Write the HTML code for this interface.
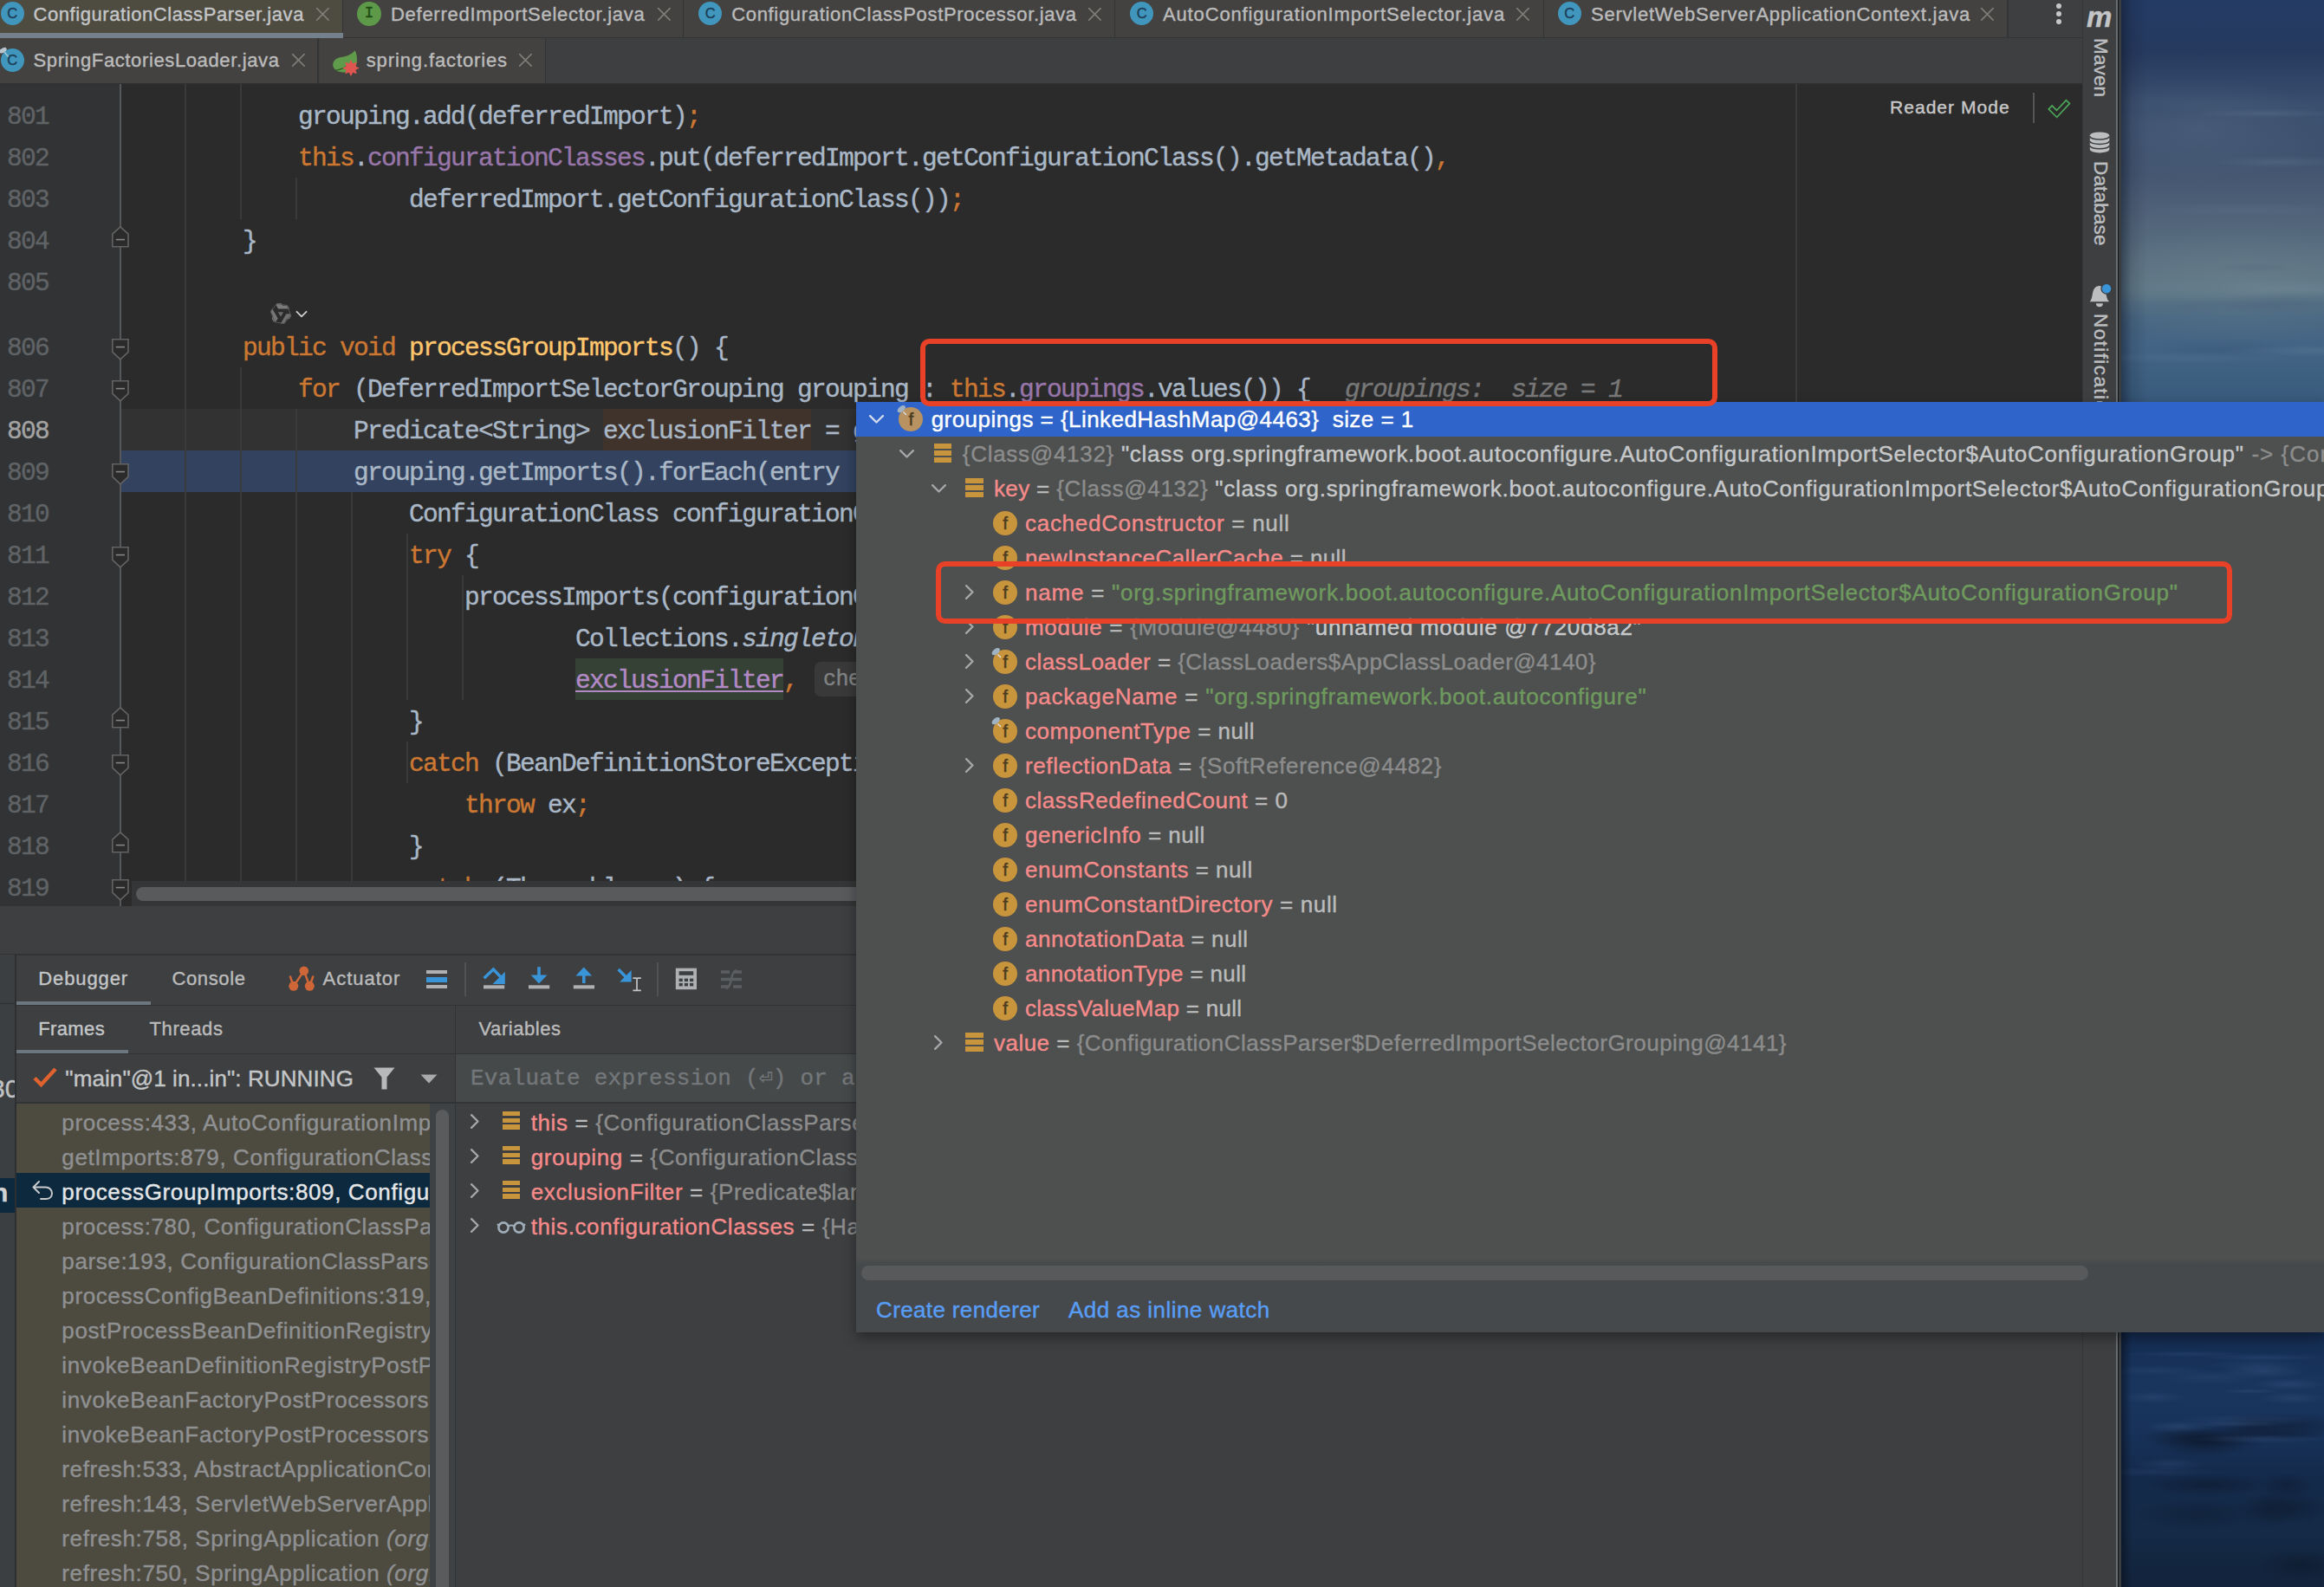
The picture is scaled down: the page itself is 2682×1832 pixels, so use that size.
<!DOCTYPE html>
<html lang="en"><head><meta charset="utf-8"><title>ConfigurationClassParser.java - debugger</title>
<style>
html,body{margin:0;padding:0;background:#3c3f41;}
body{width:2682px;height:1832px;position:relative;overflow:hidden;font-family:"Liberation Sans", sans-serif;}
#root{position:absolute;left:0;top:0;width:2682px;height:1832px;overflow:hidden;}
#root div{position:absolute;white-space:pre;box-sizing:border-box;}
#root svg{position:absolute;overflow:visible;}
.u{font-family:"Liberation Sans", sans-serif;-webkit-text-stroke:0.4px;}
.m{font-family:"Liberation Mono", monospace;-webkit-text-stroke:0.42px;}
.clip{overflow:hidden;}
</style></head>
<body><div id="root">
<div style="left:0px;top:0px;width:2403px;height:97px;background:#3d3f41;"></div>
<div style="left:0px;top:43px;width:2403px;height:1px;background:#323536;"></div>
<div style="left:0px;top:96px;width:2403px;height:1px;background:#2f3132;"></div>
<div style="left:0px;top:0px;width:395px;height:43px;background:#4e4b40;"></div>
<div style="left:395px;top:0px;width:1.5px;height:43px;background:#323435;"></div>
<div style="left:0.5000000000000018px;top:2.200000000000001px;width:27.2px;height:27.2px;border-radius:50%;background:#4096bc;"></div>
<div class="u" style="left:0.5000000000000018px;top:2.4000000000000012px;width:27.2px;height:27.2px;line-height:27.2px;text-align:center;font-size:16.5px;color:#1c3d55;font-weight:normal;">C</div>
<div class="u" style="left:38.5px;top:-3.5px;font-size:22px;line-height:40px;color:#c4c6c8;letter-spacing:0.571px;">ConfigurationClassParser.java</div>
<svg style="left:364.6px;top:8.6px" width="14.8" height="14.8" viewBox="0 0 14.8 14.8"><path d="M0.7 0.7L14.100000000000001 14.100000000000001M14.100000000000001 0.7L0.7 14.100000000000001" stroke="#7d7d78" stroke-width="1.7" fill="none" stroke-linecap="round"/></svg>
<div style="left:396px;top:0px;width:392px;height:43px;background:#434241;"></div>
<div style="left:788px;top:0px;width:1.5px;height:43px;background:#323435;"></div>
<div style="left:412.1px;top:2.200000000000001px;width:27.8px;height:27.8px;border-radius:50%;background:#5d9949;"></div>
<div class="m" style="left:412.1px;top:2.4000000000000012px;width:27.8px;height:27.8px;line-height:27.8px;text-align:center;font-size:17.5px;color:#1d4d14;font-weight:normal;">I</div>
<div class="u" style="left:451px;top:-3.5px;font-size:22px;line-height:40px;color:#bbbbbb;letter-spacing:0.726px;">DeferredImportSelector.java</div>
<svg style="left:758.6px;top:8.6px" width="14.8" height="14.8" viewBox="0 0 14.8 14.8"><path d="M0.7 0.7L14.100000000000001 14.100000000000001M14.100000000000001 0.7L0.7 14.100000000000001" stroke="#7d7d78" stroke-width="1.7" fill="none" stroke-linecap="round"/></svg>
<div style="left:789px;top:0px;width:496.5999999999999px;height:43px;background:#434241;"></div>
<div style="left:1285.6px;top:0px;width:1.5px;height:43px;background:#323435;"></div>
<div style="left:806.0999999999999px;top:2.200000000000001px;width:27.2px;height:27.2px;border-radius:50%;background:#4096bc;"></div>
<div class="u" style="left:806.0999999999999px;top:2.4000000000000012px;width:27.2px;height:27.2px;line-height:27.2px;text-align:center;font-size:16.5px;color:#1c3d55;font-weight:normal;">C</div>
<div class="u" style="left:844.2px;top:-3.5px;font-size:22px;line-height:40px;color:#bbbbbb;letter-spacing:0.678px;">ConfigurationClassPostProcessor.java</div>
<svg style="left:1256.3px;top:8.6px" width="14.8" height="14.8" viewBox="0 0 14.8 14.8"><path d="M0.7 0.7L14.100000000000001 14.100000000000001M14.100000000000001 0.7L0.7 14.100000000000001" stroke="#7d7d78" stroke-width="1.7" fill="none" stroke-linecap="round"/></svg>
<div style="left:1286.6px;top:0px;width:494.10000000000014px;height:43px;background:#434241;"></div>
<div style="left:1780.7px;top:0px;width:1.5px;height:43px;background:#323435;"></div>
<div style="left:1304.1000000000001px;top:2.200000000000001px;width:27.2px;height:27.2px;border-radius:50%;background:#4096bc;"></div>
<div class="u" style="left:1304.1000000000001px;top:2.4000000000000012px;width:27.2px;height:27.2px;line-height:27.2px;text-align:center;font-size:16.5px;color:#1c3d55;font-weight:normal;">C</div>
<div class="u" style="left:1342px;top:-3.5px;font-size:22px;line-height:40px;color:#bbbbbb;letter-spacing:0.849px;">AutoConfigurationImportSelector.java</div>
<svg style="left:1750.1999999999998px;top:8.6px" width="14.8" height="14.8" viewBox="0 0 14.8 14.8"><path d="M0.7 0.7L14.100000000000001 14.100000000000001M14.100000000000001 0.7L0.7 14.100000000000001" stroke="#7d7d78" stroke-width="1.7" fill="none" stroke-linecap="round"/></svg>
<div style="left:1781.7px;top:0px;width:534.3px;height:43px;background:#434241;"></div>
<div style="left:2316px;top:0px;width:1.5px;height:43px;background:#323435;"></div>
<div style="left:1797.7px;top:2.200000000000001px;width:27.2px;height:27.2px;border-radius:50%;background:#4096bc;"></div>
<div class="u" style="left:1797.7px;top:2.4000000000000012px;width:27.2px;height:27.2px;line-height:27.2px;text-align:center;font-size:16.5px;color:#1c3d55;font-weight:normal;">C</div>
<div class="u" style="left:1836px;top:-3.5px;font-size:22px;line-height:40px;color:#bbbbbb;letter-spacing:0.768px;">ServletWebServerApplicationContext.java</div>
<svg style="left:2286.2999999999997px;top:8.6px" width="14.8" height="14.8" viewBox="0 0 14.8 14.8"><path d="M0.7 0.7L14.100000000000001 14.100000000000001M14.100000000000001 0.7L0.7 14.100000000000001" stroke="#7d7d78" stroke-width="1.7" fill="none" stroke-linecap="round"/></svg>
<div style="left:0px;top:37.8px;width:396.2px;height:6px;background:#74808c;"></div>
<div style="left:2372.8px;top:3.8px;width:6.4px;height:6.4px;border-radius:50%;background:#c4c6c8;"></div>
<div style="left:2372.8px;top:12.8px;width:6.4px;height:6.4px;border-radius:50%;background:#c4c6c8;"></div>
<div style="left:2372.8px;top:21.8px;width:6.4px;height:6.4px;border-radius:50%;background:#c4c6c8;"></div>
<div style="left:0px;top:44px;width:367px;height:52px;background:#434241;"></div>
<div style="left:366.2px;top:44px;width:1.6px;height:52px;background:#323435;"></div>
<div style="left:0.5px;top:56.199999999999996px;width:27.2px;height:27.2px;border-radius:50%;background:#4096bc;"></div>
<div class="u" style="left:0.5px;top:56.4px;width:27.2px;height:27.2px;line-height:27.2px;text-align:center;font-size:16.5px;color:#1c3d55;font-weight:normal;">C</div>
<svg style="left:0px;top:53.5px" width="14" height="12" viewBox="0 0 14 12"><ellipse cx="3.5" cy="4.2" rx="4.6" ry="2.6" transform="rotate(-30 3.5 4.2)" fill="#b9c6cf"/><path d="M5 6L9.5 11.5" stroke="#9fc3d6" stroke-width="1.6"/></svg>
<div class="u" style="left:38.5px;top:50.0px;font-size:22px;line-height:40px;color:#bbbbbb;letter-spacing:0.622px;">SpringFactoriesLoader.java</div>
<svg style="left:336.6px;top:62.4px" width="14.8" height="14.8" viewBox="0 0 14.8 14.8"><path d="M0.7 0.7L14.100000000000001 14.100000000000001M14.100000000000001 0.7L0.7 14.100000000000001" stroke="#7d7d78" stroke-width="1.7" fill="none" stroke-linecap="round"/></svg>
<div style="left:368.5px;top:44px;width:260px;height:52px;background:#434241;"></div>
<div style="left:628.6px;top:44px;width:1.5px;height:52px;background:#323435;"></div>
<svg style="left:380px;top:54px" width="38" height="34" viewBox="380 54 38 34"><path d="M409.7 58.3C412.5 64 413 72 410 78C406 84.5 396 84 390.5 82.5C388 82 385 79.5 384.2 75.8C383.8 70 388.5 66.5 394 66C400.5 65.3 406 62.5 409.7 58.3Z" fill="#609a4b"/><path d="M387 81.2C393 80.5 399 78 404 73.5" stroke="#2d5a26" stroke-width="1.2" fill="none"/><path d="M405 69l2.2 4.3 4.6-1.6-1.4 4.7 4.4 2.1-4.4 2.2 1.4 4.6-4.6-1.5-2.2 4.3-2.2-4.3-4.6 1.5 1.4-4.6-4.4-2.2 4.4-2.1-1.4-4.7 4.6 1.6z" fill="#de564f"/></svg>
<div class="u" style="left:422.7px;top:50.0px;font-size:22px;line-height:40px;color:#bbbbbb;letter-spacing:0.882px;">spring.factories</div>
<svg style="left:598.6px;top:62.4px" width="14.8" height="14.8" viewBox="0 0 14.8 14.8"><path d="M0.7 0.7L14.100000000000001 14.100000000000001M14.100000000000001 0.7L0.7 14.100000000000001" stroke="#7d7d78" stroke-width="1.7" fill="none" stroke-linecap="round"/></svg>
<div style="left:0px;top:97px;width:2403px;height:949px;background:#2b2b2b;"></div>
<div style="left:0px;top:97px;width:138px;height:949px;background:#313335;"></div>
<div style="left:139px;top:472px;width:2264px;height:48px;background:#323232;"></div>
<div style="left:139px;top:520px;width:2264px;height:48px;background:#32425f;"></div>
<div style="left:696px;top:472px;width:240px;height:48px;background:#40332b;"></div>
<div style="left:664px;top:760px;width:240px;height:48px;background:#344134;"></div>
<div style="left:138px;top:97px;width:1.5px;height:949px;background:#555759;"></div>
<div style="left:213px;top:97px;width:1.5px;height:920px;background:#3a3a3a;"></div>
<div style="left:277px;top:97px;width:1.5px;height:156px;background:#3a3a3a;"></div>
<div style="left:277px;top:424px;width:1.5px;height:593px;background:#3a3a3a;"></div>
<div style="left:341px;top:205px;width:1.5px;height:48px;background:#3a3a3a;"></div>
<div style="left:341px;top:472px;width:1.5px;height:545px;background:#3a3a3a;"></div>
<div style="left:405px;top:568px;width:1.5px;height:449px;background:#3a3a3a;"></div>
<div style="left:469px;top:616px;width:1.5px;height:192px;background:#3a3a3a;"></div>
<div style="left:469px;top:856px;width:1.5px;height:48px;background:#3a3a3a;"></div>
<div style="left:533px;top:664px;width:1.5px;height:144px;background:#3a3a3a;"></div>
<div style="left:2072px;top:97px;width:1.5px;height:949px;background:#3b3b3b;"></div>
<div class="m" style="left:8px;top:110.5px;font-size:29.5px;line-height:48px;color:#606366;letter-spacing:-1.703px;">801</div>
<div class="m" style="left:8px;top:158.5px;font-size:29.5px;line-height:48px;color:#606366;letter-spacing:-1.703px;">802</div>
<div class="m" style="left:8px;top:206.5px;font-size:29.5px;line-height:48px;color:#606366;letter-spacing:-1.703px;">803</div>
<div class="m" style="left:8px;top:254.5px;font-size:29.5px;line-height:48px;color:#606366;letter-spacing:-1.703px;">804</div>
<div class="m" style="left:8px;top:302.5px;font-size:29.5px;line-height:48px;color:#606366;letter-spacing:-1.703px;">805</div>
<div class="m" style="left:8px;top:377.5px;font-size:29.5px;line-height:48px;color:#606366;letter-spacing:-1.703px;">806</div>
<div class="m" style="left:8px;top:425.5px;font-size:29.5px;line-height:48px;color:#606366;letter-spacing:-1.703px;">807</div>
<div class="m" style="left:8px;top:473.5px;font-size:29.5px;line-height:48px;color:#a4a3a3;letter-spacing:-1.703px;">808</div>
<div class="m" style="left:8px;top:521.5px;font-size:29.5px;line-height:48px;color:#606366;letter-spacing:-1.703px;">809</div>
<div class="m" style="left:8px;top:569.5px;font-size:29.5px;line-height:48px;color:#606366;letter-spacing:-1.703px;">810</div>
<div class="m" style="left:8px;top:617.5px;font-size:29.5px;line-height:48px;color:#606366;letter-spacing:-1.703px;">811</div>
<div class="m" style="left:8px;top:665.5px;font-size:29.5px;line-height:48px;color:#606366;letter-spacing:-1.703px;">812</div>
<div class="m" style="left:8px;top:713.5px;font-size:29.5px;line-height:48px;color:#606366;letter-spacing:-1.703px;">813</div>
<div class="m" style="left:8px;top:761.5px;font-size:29.5px;line-height:48px;color:#606366;letter-spacing:-1.703px;">814</div>
<div class="m" style="left:8px;top:809.5px;font-size:29.5px;line-height:48px;color:#606366;letter-spacing:-1.703px;">815</div>
<div class="m" style="left:8px;top:857.5px;font-size:29.5px;line-height:48px;color:#606366;letter-spacing:-1.703px;">816</div>
<div class="m" style="left:8px;top:905.5px;font-size:29.5px;line-height:48px;color:#606366;letter-spacing:-1.703px;">817</div>
<div class="m" style="left:8px;top:953.5px;font-size:29.5px;line-height:48px;color:#606366;letter-spacing:-1.703px;">818</div>
<div class="m" style="left:8px;top:1001.5px;font-size:29.5px;line-height:48px;color:#606366;letter-spacing:-1.703px;">819</div>
<svg style="left:129.0px;top:261.4px" width="19.8" height="24.6" viewBox="0 0 19.8 24.6"><path d="M0.8 23.8H19.0V9.2L9.9 0.8L0.8 9.2Z" fill="#2b2b2b" stroke="#636363" stroke-width="1.6"/><path d="M4.8 15.6H15.0" stroke="#858585" stroke-width="1.6"/></svg>
<svg style="left:129.0px;top:391px" width="19.8" height="24.6" viewBox="0 0 19.8 24.6"><path d="M0.8 0.8H19.0V15.400000000000002L9.9 23.8L0.8 15.400000000000002Z" fill="#2b2b2b" stroke="#636363" stroke-width="1.6"/><path d="M4.8 9.6H15.0" stroke="#858585" stroke-width="1.6"/></svg>
<svg style="left:129.0px;top:439px" width="19.8" height="24.6" viewBox="0 0 19.8 24.6"><path d="M0.8 0.8H19.0V15.400000000000002L9.9 23.8L0.8 15.400000000000002Z" fill="#2b2b2b" stroke="#636363" stroke-width="1.6"/><path d="M4.8 9.6H15.0" stroke="#858585" stroke-width="1.6"/></svg>
<svg style="left:129.0px;top:535px" width="19.8" height="24.6" viewBox="0 0 19.8 24.6"><path d="M0.8 0.8H19.0V15.400000000000002L9.9 23.8L0.8 15.400000000000002Z" fill="#2b2b2b" stroke="#636363" stroke-width="1.6"/><path d="M4.8 9.6H15.0" stroke="#858585" stroke-width="1.6"/></svg>
<svg style="left:129.0px;top:631px" width="19.8" height="24.6" viewBox="0 0 19.8 24.6"><path d="M0.8 0.8H19.0V15.400000000000002L9.9 23.8L0.8 15.400000000000002Z" fill="#2b2b2b" stroke="#636363" stroke-width="1.6"/><path d="M4.8 9.6H15.0" stroke="#858585" stroke-width="1.6"/></svg>
<svg style="left:129.0px;top:816.4px" width="19.8" height="24.6" viewBox="0 0 19.8 24.6"><path d="M0.8 23.8H19.0V9.2L9.9 0.8L0.8 9.2Z" fill="#2b2b2b" stroke="#636363" stroke-width="1.6"/><path d="M4.8 15.6H15.0" stroke="#858585" stroke-width="1.6"/></svg>
<svg style="left:129.0px;top:871px" width="19.8" height="24.6" viewBox="0 0 19.8 24.6"><path d="M0.8 0.8H19.0V15.400000000000002L9.9 23.8L0.8 15.400000000000002Z" fill="#2b2b2b" stroke="#636363" stroke-width="1.6"/><path d="M4.8 9.6H15.0" stroke="#858585" stroke-width="1.6"/></svg>
<svg style="left:129.0px;top:960.4px" width="19.8" height="24.6" viewBox="0 0 19.8 24.6"><path d="M0.8 23.8H19.0V9.2L9.9 0.8L0.8 9.2Z" fill="#2b2b2b" stroke="#636363" stroke-width="1.6"/><path d="M4.8 15.6H15.0" stroke="#858585" stroke-width="1.6"/></svg>
<svg style="left:129.0px;top:1015px" width="19.8" height="24.6" viewBox="0 0 19.8 24.6"><path d="M0.8 0.8H19.0V15.400000000000002L9.9 23.8L0.8 15.400000000000002Z" fill="#2b2b2b" stroke="#636363" stroke-width="1.6"/><path d="M4.8 9.6H15.0" stroke="#858585" stroke-width="1.6"/></svg>
<div class="m" style="left:344px;top:110.5px;font-size:29.5px;line-height:48px;color:#a9b7c6;letter-spacing:-1.703px;">grouping.add(deferredImport)<span style="color:#cc7832;">;</span></div>
<div class="m" style="left:344px;top:158.5px;font-size:29.5px;line-height:48px;color:#a9b7c6;letter-spacing:-1.703px;"><span style="color:#cc7832;">this</span>.<span style="color:#9876aa;">configurationClasses</span>.put(deferredImport.getConfigurationClass().getMetadata()<span style="color:#cc7832;">,</span></div>
<div class="m" style="left:472px;top:206.5px;font-size:29.5px;line-height:48px;color:#a9b7c6;letter-spacing:-1.703px;">deferredImport.getConfigurationClass())<span style="color:#cc7832;">;</span></div>
<div class="m" style="left:280px;top:254.5px;font-size:29.5px;line-height:48px;color:#a9b7c6;letter-spacing:-1.703px;">}</div>
<svg style="left:310px;top:348px" width="28" height="28" viewBox="-14 -14 28 28"><path d="M-4.2 -11.9H0.2L2.3 -9.2H8L10.2 -5.6H-3L-5.2 -9.4Z" fill="#7a7a7a"/><path d="M-4.2 -11.9H0.2L2.3 -9.2H8L10.2 -5.6H-3L-5.2 -9.4Z" fill="#6f6f6f" transform="rotate(120)"/><path d="M-4.2 -11.9H0.2L2.3 -9.2H8L10.2 -5.6H-3L-5.2 -9.4Z" fill="#767676" transform="rotate(240)"/><path d="M-3.2 -1.8H3.1L0 3.6Z" fill="#6c6c6c"/><path d="M-4.5 -11.5L-11.6 -2.2L-7 9.8L4.2 11.5L11.6 2L7.4 -9.4Z" fill="none" stroke="#565656" stroke-width="1"/></svg>
<svg style="left:340px;top:356px" width="16" height="12" viewBox="340 356 16 12"><path d="M342.5 359.8L348 365.4L353.6 359.8" stroke="#cfcfcf" stroke-width="1.8" fill="none" stroke-linecap="round" stroke-linejoin="round"/></svg>
<div class="m" style="left:280px;top:377.5px;font-size:29.5px;line-height:48px;color:#a9b7c6;letter-spacing:-1.703px;"><span style="color:#cc7832;">public void </span><span style="color:#ffc66d;">processGroupImports</span>() {</div>
<div class="m" style="left:344px;top:425.5px;font-size:29.5px;line-height:48px;color:#a9b7c6;letter-spacing:-1.703px;"><span style="color:#cc7832;">for </span>(DeferredImportSelectorGrouping grouping : <span style="color:#cc7832;">this</span>.<span style="color:#9876aa;">groupings</span>.values()) {</div>
<div class="m" style="left:1552px;top:425.5px;font-size:29.5px;line-height:48px;color:#787878;letter-spacing:-1.703px;font-style:italic;">groupings:  size = 1</div>
<div class="m" style="left:408px;top:473.5px;font-size:29.5px;line-height:48px;color:#a9b7c6;letter-spacing:-1.703px;">Predicate&lt;String&gt; exclusionFilter = grouping.getCandidateFilter()<span style="color:#cc7832;">;</span></div>
<div class="m" style="left:408px;top:521.5px;font-size:29.5px;line-height:48px;color:#a9b7c6;letter-spacing:-1.703px;">grouping.getImports().forEach(entry -&gt; {</div>
<div class="m" style="left:472px;top:569.5px;font-size:29.5px;line-height:48px;color:#a9b7c6;letter-spacing:-1.703px;">ConfigurationClass configurationClass = <span style="color:#cc7832;">this</span>.<span style="color:#9876aa;">configurationClasses</span>.get(</div>
<div class="m" style="left:472px;top:617.5px;font-size:29.5px;line-height:48px;color:#a9b7c6;letter-spacing:-1.703px;"><span style="color:#cc7832;">try </span>{</div>
<div class="m" style="left:536px;top:665.5px;font-size:29.5px;line-height:48px;color:#a9b7c6;letter-spacing:-1.703px;">processImports(configurationClass, asSourceClass(configurationClass, exclusionFilter)<span style="color:#cc7832;">,</span></div>
<div class="m" style="left:664px;top:713.5px;font-size:29.5px;line-height:48px;color:#a9b7c6;letter-spacing:-1.703px;">Collections.<span style="font-style:italic;">singleton</span>(entry.getImportClassName())<span style="color:#cc7832;">,</span></div>
<div class="m" style="left:664px;top:761.5px;font-size:29.5px;line-height:48px;color:#a9b7c6;letter-spacing:-1.703px;"><span style="color:#b389c5;text-decoration:underline;text-decoration-thickness:1.5px;text-underline-offset:3.3px;">exclusionFilter</span><span style="color:#cc7832;">,</span></div>
<div style="left:940.3px;top:764.2px;width:70px;height:40.3px;background:#393939;border-radius:7px;"></div>
<div class="m" style="left:950px;top:760.5px;font-size:25px;line-height:48px;color:#808284;letter-spacing:-0.600px;">checkForCircularImports:</div>
<div class="m" style="left:472px;top:809.5px;font-size:29.5px;line-height:48px;color:#a9b7c6;letter-spacing:-1.703px;">}</div>
<div class="m" style="left:472px;top:857.5px;font-size:29.5px;line-height:48px;color:#a9b7c6;letter-spacing:-1.703px;"><span style="color:#cc7832;">catch </span>(BeanDefinitionStoreException ex) {</div>
<div class="m" style="left:536px;top:905.5px;font-size:29.5px;line-height:48px;color:#a9b7c6;letter-spacing:-1.703px;"><span style="color:#cc7832;">throw </span>ex<span style="color:#cc7832;">;</span></div>
<div class="m" style="left:472px;top:953.5px;font-size:29.5px;line-height:48px;color:#a9b7c6;letter-spacing:-1.703px;">}</div>
<div class="m" style="left:472px;top:1001.5px;font-size:29.5px;line-height:48px;color:#a9b7c6;letter-spacing:-1.703px;"><span style="color:#cc7832;">catch </span>(Throwable ex) {</div>
<div style="left:152px;top:1017px;width:2251px;height:29.5px;background:#353637;"></div>
<div style="left:157px;top:1024.3px;width:1900px;height:16.1px;background:#585a5c;border-radius:8px;"></div>
<div class="u" style="left:2181px;top:104.3px;font-size:21px;line-height:40px;color:#c8c8c8;letter-spacing:1.041px;">Reader Mode</div>
<div style="left:2346.2px;top:106.5px;width:1.8px;height:35px;background:#565656;"></div>
<svg style="left:2358px;top:110px" width="36" height="30" viewBox="2358 110 36 30"><path d="M2365.6 123.4L2373.6 131.4L2387 117" stroke="#4ca658" stroke-width="7.2" fill="none"/><path d="M2366.8 124.6L2373.6 131.4L2385.8 118.3" stroke="#2b2b2b" stroke-width="3.8" fill="none"/></svg>
<div style="left:2402.5px;top:0px;width:40px;height:1832px;background:#3d3f41;"></div>
<div style="left:2402.5px;top:0px;width:1px;height:1832px;background:#353739;"></div>
<div style="left:2442px;top:0px;width:2.2px;height:1832px;background:#6b6d6f;"></div>
<div style="left:2444.2px;top:0px;width:1.2px;height:1832px;background:#101214;"></div>
<div style="left:2445.4px;top:0px;width:3px;height:1832px;background:#3b3e41;"></div>
<div style="left:2448.3px;top:0;width:234px;height:470px;background:linear-gradient(90deg,rgba(15,22,40,.5) 0,rgba(15,22,40,.15) 12px,rgba(15,22,40,0) 30px),radial-gradient(ellipse 150px 60px at 90px 150px,rgba(90,110,135,.35),rgba(90,110,135,0)),radial-gradient(ellipse 190px 70px at 140px 330px,rgba(120,140,150,.30),rgba(120,140,150,0)),linear-gradient(180deg,#243b64 0,#263a5f 60px,#3a4f6f 120px,#3f526e 180px,#4e6077 240px,#5b7182 300px,#5e7787 335px,#486782 365px,#436485 400px,#3c5e7f 440px,#38597b 470px);"></div>
<div style="left:2448.3px;top:1537px;width:234px;height:295px;background:linear-gradient(90deg,rgba(8,14,28,.6) 0,rgba(8,14,28,0) 12px),radial-gradient(ellipse 60px 8px at 102px 53px,rgba(95,130,185,0.11),rgba(95,130,185,0)),radial-gradient(ellipse 58px 7px at 157px 39px,rgba(95,130,185,0.11),rgba(95,130,185,0)),radial-gradient(ellipse 37px 3px at 149px 69px,rgba(95,130,185,0.15),rgba(95,130,185,0)),radial-gradient(ellipse 40px 7px at 37px 76px,rgba(95,130,185,0.15),rgba(95,130,185,0)),radial-gradient(ellipse 49px 8px at 164px 46px,rgba(95,130,185,0.18),rgba(95,130,185,0)),radial-gradient(ellipse 72px 6px at 35px 162px,rgba(95,130,185,0.11),rgba(95,130,185,0)),radial-gradient(ellipse 70px 4px at 76px 26px,rgba(95,130,185,0.13),rgba(95,130,185,0)),radial-gradient(ellipse 42px 7px at 56px 153px,rgba(95,130,185,0.14),rgba(95,130,185,0)),radial-gradient(ellipse 41px 7px at 194px 61px,rgba(95,130,185,0.17),rgba(95,130,185,0)),radial-gradient(ellipse 41px 7px at 68px 110px,rgba(95,130,185,0.19),rgba(95,130,185,0)),radial-gradient(ellipse 74px 4px at 164px 30px,rgba(95,130,185,0.16),rgba(95,130,185,0)),radial-gradient(ellipse 84px 5px at 156px 124px,rgba(95,130,185,0.16),rgba(95,130,185,0)),radial-gradient(ellipse 54px 4px at 136px 107px,rgba(95,130,185,0.20),rgba(95,130,185,0)),radial-gradient(ellipse 40px 7px at 198px 77px,rgba(95,130,185,0.14),rgba(95,130,185,0)),radial-gradient(ellipse 81px 6px at 146px 102px,rgba(95,130,185,0.13),rgba(95,130,185,0)),radial-gradient(ellipse 67px 6px at 38px 45px,rgba(95,130,185,0.12),rgba(95,130,185,0)),radial-gradient(ellipse 61px 14px at 107px 128px,rgba(9,17,30,0.26),rgba(9,17,30,0)),radial-gradient(ellipse 78px 16px at 191px 109px,rgba(9,17,30,0.39),rgba(9,17,30,0)),radial-gradient(ellipse 74px 13px at 100px 177px,rgba(9,17,30,0.40),rgba(9,17,30,0)),radial-gradient(ellipse 34px 21px at 168px 206px,rgba(9,17,30,0.27),rgba(9,17,30,0)),radial-gradient(ellipse 74px 18px at 89px 211px,rgba(9,17,30,0.27),rgba(9,17,30,0)),radial-gradient(ellipse 49px 18px at 207px 269px,rgba(9,17,30,0.39),rgba(9,17,30,0)),radial-gradient(ellipse 48px 19px at 194px 204px,rgba(9,17,30,0.35),rgba(9,17,30,0)),radial-gradient(ellipse 31px 15px at 191px 178px,rgba(9,17,30,0.34),rgba(9,17,30,0)),radial-gradient(ellipse 61px 8px at 176px 119px,rgba(9,17,30,0.30),rgba(9,17,30,0)),radial-gradient(ellipse 77px 11px at 93px 123px,rgba(9,17,30,0.35),rgba(9,17,30,0)),radial-gradient(ellipse 40px 15px at 147px 110px,rgba(9,17,30,0.35),rgba(9,17,30,0)),radial-gradient(ellipse 57px 21px at 91px 125px,rgba(9,17,30,0.39),rgba(9,17,30,0)),linear-gradient(180deg,#142b50 0,#19355e 60px,#18325a 110px,#142a4b 170px,#142a46 230px,#12233b 295px);"></div>
<div style="left:2448.3px;top:0;width:234px;height:470px;background:radial-gradient(ellipse 119px 7px at 80px 413px,rgba(150,175,195,0.09),rgba(150,175,195,0)),radial-gradient(ellipse 58px 14px at 174px 352px,rgba(30,50,85,0.06),rgba(30,50,85,0)),radial-gradient(ellipse 120px 8px at 140px 242px,rgba(150,175,195,0.08),rgba(150,175,195,0)),radial-gradient(ellipse 119px 13px at 203px 350px,rgba(30,50,85,0.10),rgba(30,50,85,0)),radial-gradient(ellipse 79px 7px at 183px 187px,rgba(150,175,195,0.13),rgba(150,175,195,0)),radial-gradient(ellipse 51px 6px at 153px 309px,rgba(30,50,85,0.07),rgba(30,50,85,0)),radial-gradient(ellipse 88px 5px at 171px 131px,rgba(150,175,195,0.13),rgba(150,175,195,0)),radial-gradient(ellipse 99px 11px at 88px 352px,rgba(30,50,85,0.09),rgba(30,50,85,0)),radial-gradient(ellipse 106px 7px at 225px 405px,rgba(150,175,195,0.13),rgba(150,175,195,0)),radial-gradient(ellipse 67px 12px at 44px 128px,rgba(30,50,85,0.08),rgba(30,50,85,0)),radial-gradient(ellipse 88px 11px at 192px 333px,rgba(150,175,195,0.10),rgba(150,175,195,0)),radial-gradient(ellipse 94px 13px at 118px 403px,rgba(30,50,85,0.11),rgba(30,50,85,0));"></div>
<div class="u" style="left:2408px;top:3px;font-size:33px;line-height:34px;font-weight:bold;font-style:italic;color:#c3c5c7;letter-spacing:-1px;">m</div>
<div class="u" style="left:0px;top:-15.0px;font-size:22.5px;line-height:30px;color:#bcbec0;letter-spacing:0.151px;left:2438.8px;top:43.7px;transform-origin:0 0;transform:rotate(90deg);">Maven</div>
<svg style="left:2408px;top:150px" width="30" height="30" viewBox="2408 150 30 30"><path d="M2411.8 156.3A11.25 3.8 0 0 1 2434.3 156.3V172.6A11.25 3.8 0 0 1 2411.8 172.6Z" fill="#bcbec0"/><path d="M2411.8 157.3A11.25 3.8 0 0 0 2434.3 157.3" stroke="#3c3f41" stroke-width="1.5" fill="none"/><path d="M2411.8 162.65A11.25 3.8 0 0 0 2434.3 162.65" stroke="#3c3f41" stroke-width="1.5" fill="none"/><path d="M2411.8 168.0A11.25 3.8 0 0 0 2434.3 168.0" stroke="#3c3f41" stroke-width="1.5" fill="none"/></svg>
<div class="u" style="left:0px;top:-15.0px;font-size:22.5px;line-height:30px;color:#bcbec0;letter-spacing:0.159px;left:2438.8px;top:186px;transform-origin:0 0;transform:rotate(90deg);">Database</div>
<svg style="left:2408px;top:326px" width="32" height="32" viewBox="2408 326 32 32"><path d="M2411.8 348.2C2415.5 344 2414 337 2417 333C2419.5 329.5 2425 329 2428 332.5C2431 336 2430 344 2434 348.2Z" fill="#bcbec0"/><path d="M2418.9 350.3H2426.9A4 3.9 0 0 1 2418.9 350.3Z" fill="#bcbec0"/><circle cx="2431" cy="333.2" r="6.6" fill="#3c3f41"/><circle cx="2431" cy="333.2" r="5.2" fill="#3a94d9"/></svg>
<div class="u" style="left:0px;top:-15.0px;font-size:22.5px;line-height:30px;color:#bcbec0;letter-spacing:1.418px;left:2438.8px;top:362.2px;transform-origin:0 0;transform:rotate(90deg);">Notifications</div>
<div style="left:0px;top:1046px;width:2403px;height:786px;background:#3d3f41;"></div>
<div style="left:0px;top:1101px;width:2403px;height:1.5px;background:#313335;"></div>
<div style="left:0px;top:1102px;width:17px;height:730px;background:#3c3f41;"></div>
<div style="left:17px;top:1102px;width:1.5px;height:730px;background:#2d2f30;"></div>
<div style="left:0px;top:1360px;width:17px;height:40px;background:#0d293e;"></div>
<div style="left:0px;top:1157.5px;width:17px;height:1.5px;background:#2d2f30;"></div>
<div class="clip" style="left:0;top:1102px;width:17px;height:730px;">
<div class="u" style="left:-11px;top:135.0px;font-size:30px;line-height:40px;color:#c0c2c4;">30</div>
<div class="u" style="left:-9px;top:255.0px;font-size:30px;line-height:40px;color:#d0d2d4;font-weight:bold;">n</div>
</div>
<div class="u" style="left:44.3px;top:1110.0px;font-size:22px;line-height:40px;color:#c4c6c8;letter-spacing:0.882px;">Debugger</div>
<div style="left:18.5px;top:1155.5px;width:155.5px;height:5px;background:#6d7780;"></div>
<div class="u" style="left:198.4px;top:1110.0px;font-size:22px;line-height:40px;color:#bbbbbb;letter-spacing:0.654px;">Console</div>
<svg style="left:330px;top:1112px" width="36" height="34" viewBox="330 1112 36 34"><path d="M338.8 1138.5L350.8 1120.5L357.3 1138.5M338.8 1138.5L335 1127.5M357.3 1138.5L361.2 1127.5" stroke="#cf6638" stroke-width="2.5" fill="none" stroke-linecap="round"/><circle cx="350.8" cy="1120.7" r="5.3" fill="#cf6638"/><circle cx="338.8" cy="1138.3" r="5.5" fill="#cf6638"/><circle cx="357.3" cy="1138.3" r="5.5" fill="#cf6638"/></svg>
<div class="u" style="left:372.6px;top:1110.0px;font-size:22px;line-height:40px;color:#bbbbbb;letter-spacing:0.970px;">Actuator</div>
<div style="left:491.6px;top:1120px;width:24.8px;height:4.1px;background:#aeb0b2;"></div>
<div style="left:491.6px;top:1127.7px;width:24.8px;height:6px;background:#3a95d8;"></div>
<div style="left:491.6px;top:1137.3px;width:24.8px;height:4.1px;background:#aeb0b2;"></div>
<div style="left:536.3px;top:1111px;width:1.6px;height:38.5px;background:#505355;"></div>
<svg style="left:550px;top:1110px" width="320" height="40" viewBox="550 1110 320 40"><path d="M558.6 1129.2L569.4 1119L577.5 1127.5" stroke="#3a95d8" stroke-width="3.4" fill="none"/><path d="M582.8 1121.8V1136H568.6Z" fill="#3a95d8"/><rect x="558" y="1137.3" width="24.2" height="4.1" fill="#aeb0b2"/><path d="M622 1116.2V1128" stroke="#3a95d8" stroke-width="3.6"/><path d="M612.6 1125.5H631.4L622 1135.4Z" fill="#3a95d8"/><rect x="610" y="1137.3" width="24.2" height="4.1" fill="#aeb0b2"/><path d="M673.8 1135V1124" stroke="#3a95d8" stroke-width="3.6"/><path d="M664.4 1126.6H683.2L673.8 1116.6Z" fill="#3a95d8"/><rect x="661.8" y="1137.3" width="24.2" height="4.1" fill="#aeb0b2"/><path d="M713.6 1119L724.5 1130" stroke="#3a95d8" stroke-width="3.4"/><path d="M728.6 1120V1133.4H715.2Z" fill="#3a95d8"/><path d="M730.4 1129.2h3.6q1 0 1 1v12.2q0 1 -1 1h-3.6M739.8 1129.2h-3.6q-1 0 -1 1M739.8 1143.4h-3.6q-1 0 -1 -1" stroke="#c3c5c7" stroke-width="1.7" fill="none"/><rect x="779.8" y="1117.6" width="24.2" height="24.6" fill="#aeb0b2"/><rect x="783.6" y="1121.2" width="16.6" height="4.6" fill="#3c3f41"/><rect x="783.6" y="1129.6" width="4.2" height="3.5" fill="#3c3f41"/><rect x="789.8000000000001" y="1129.6" width="4.2" height="3.5" fill="#3c3f41"/><rect x="796.0" y="1129.6" width="4.2" height="3.5" fill="#3c3f41"/><rect x="783.6" y="1134.8999999999999" width="4.2" height="3.5" fill="#3c3f41"/><rect x="789.8000000000001" y="1134.8999999999999" width="4.2" height="3.5" fill="#3c3f41"/><rect x="796.0" y="1134.8999999999999" width="4.2" height="3.5" fill="#3c3f41"/><path d="M832 1122H842M848 1122H856M832 1130.5H856M832 1139H840M846 1139H856" stroke="#5b5e60" stroke-width="3.6"/><path d="M838 1141C846 1139 842 1122 850 1120" stroke="#5b5e60" stroke-width="2.4" fill="none"/></svg>
<div style="left:758.3px;top:1111px;width:1.6px;height:38.5px;background:#505355;"></div>
<div style="left:18.5px;top:1159.5px;width:2403px;height:1.5px;background:#313335;"></div>
<div class="u" style="left:44.3px;top:1168.0px;font-size:22px;line-height:40px;color:#c4c6c8;letter-spacing:0.356px;">Frames</div>
<div style="left:18.5px;top:1211.5px;width:129.5px;height:5px;background:#6d7780;"></div>
<div class="u" style="left:172.5px;top:1168.0px;font-size:22px;line-height:40px;color:#bbbbbb;letter-spacing:0.612px;">Threads</div>
<div class="u" style="left:552.5px;top:1168.0px;font-size:22px;line-height:40px;color:#bbbbbb;letter-spacing:0.567px;">Variables</div>
<div style="left:18.5px;top:1215.5px;width:2403px;height:1.5px;background:#313335;"></div>
<div style="left:524.5px;top:1160px;width:1.5px;height:672px;background:#313335;"></div>
<svg style="left:38px;top:1231px" width="28" height="26" viewBox="0 0 28 26"><path d="M2 13.5L9.5 21L26 3" stroke="#e0622f" stroke-width="4.4" fill="none"/></svg>
<div class="u" style="left:75.3px;top:1224.5px;font-size:26px;line-height:40px;color:#c4c6c8;letter-spacing:0.102px;">"main"@1 in...in": RUNNING</div>
<svg style="left:431px;top:1232px" width="25" height="26" viewBox="0 0 25 26"><path d="M0.5 0.5H24.5L15.5 11.5V25.5H9.5V11.5Z" fill="#b7b9bb"/></svg>
<svg style="left:485px;top:1240px" width="20" height="11" viewBox="0 0 20 11"><path d="M0.5 0.5H19.5L10 10.5Z" fill="#a9abad"/></svg>
<div style="left:18.5px;top:1272px;width:506px;height:1.5px;background:#313335;"></div>
<div style="left:526px;top:1217px;width:1877px;height:55px;background:#45494a;"></div>
<div class="m" style="left:543px;top:1224.5px;font-size:26px;line-height:40px;color:#74777a;letter-spacing:0.250px;">Evaluate expression (⏎) or add a watch (⇧⌘⏎)</div>
<div style="left:526px;top:1272px;width:1877px;height:1.5px;background:#323536;"></div>
<div style="left:18.5px;top:1273.5px;width:477.5px;height:560px;background:#4d4b40;"></div>
<div style="left:18.5px;top:1353.5px;width:477.5px;height:40px;background:#0d293e;"></div>
<div style="left:496px;top:1273.5px;width:28.5px;height:560px;background:#3f4244;"></div>
<div style="left:502.5px;top:1280.5px;width:15.5px;height:600px;background:#595b5d;border-radius:8px;"></div>
<div class="clip" style="left:18.5px;top:1273.5px;width:477.5px;height:560px;">
<div class="u" style="left:52.8px;top:2.0px;font-size:26px;line-height:40px;color:#8f9092;letter-spacing:0.620px;">process:433, AutoConfigurationImportSelector$AutoConfigurationGroup</div>
<div class="u" style="left:52.8px;top:42.0px;font-size:26px;line-height:40px;color:#8f9092;letter-spacing:0.620px;">getImports:879, ConfigurationClassParser$DeferredImportSelectorGrouping</div>
<div class="u" style="left:52.8px;top:82.0px;font-size:26px;line-height:40px;color:#e4e6e8;letter-spacing:0.620px;">processGroupImports:809, ConfigurationClassParser$DeferredImportSelectorGroupingHandler</div>
<div class="u" style="left:52.8px;top:122.0px;font-size:26px;line-height:40px;color:#8f9092;letter-spacing:0.620px;">process:780, ConfigurationClassParser$DeferredImportSelectorHandler</div>
<div class="u" style="left:52.8px;top:162.0px;font-size:26px;line-height:40px;color:#8f9092;letter-spacing:0.620px;">parse:193, ConfigurationClassParser (org.springframework.context.annotation)</div>
<div class="u" style="left:52.8px;top:202.0px;font-size:26px;line-height:40px;color:#8f9092;letter-spacing:0.620px;">processConfigBeanDefinitions:319, ConfigurationClassPostProcessor</div>
<div class="u" style="left:52.8px;top:242.0px;font-size:26px;line-height:40px;color:#8f9092;letter-spacing:0.620px;">postProcessBeanDefinitionRegistry:232, ConfigurationClassPostProcessor</div>
<div class="u" style="left:52.8px;top:282.0px;font-size:26px;line-height:40px;color:#8f9092;letter-spacing:0.620px;">invokeBeanDefinitionRegistryPostProcessors:311, PostProcessorRegistrationDelegate</div>
<div class="u" style="left:52.8px;top:322.0px;font-size:26px;line-height:40px;color:#8f9092;letter-spacing:0.620px;">invokeBeanFactoryPostProcessors:112, PostProcessorRegistrationDelegate</div>
<div class="u" style="left:52.8px;top:362.0px;font-size:26px;line-height:40px;color:#8f9092;letter-spacing:0.620px;">invokeBeanFactoryPostProcessors:746, AbstractApplicationContext</div>
<div class="u" style="left:52.8px;top:402.0px;font-size:26px;line-height:40px;color:#8f9092;letter-spacing:0.620px;">refresh:533, AbstractApplicationContext (org.springframework.context.support)</div>
<div class="u" style="left:52.8px;top:442.0px;font-size:26px;line-height:40px;color:#8f9092;letter-spacing:0.620px;">refresh:143, ServletWebServerApplicationContext (org.springframework.boot)</div>
<div class="u" style="left:52.8px;top:482.0px;font-size:26px;line-height:40px;color:#8f9092;letter-spacing:0.620px;">refresh:758, SpringApplication <span style="font-style:italic;">(org.springframework.boot)</span></div>
<div class="u" style="left:52.8px;top:522.0px;font-size:26px;line-height:40px;color:#8f9092;letter-spacing:0.620px;">refresh:750, SpringApplication <span style="font-style:italic;">(org.springframework.boot)</span></div>
</div>
<svg style="left:36px;top:1362px" width="26" height="24" viewBox="0 0 26 24"><path d="M9 2L2.5 8.5L9 15M3 8.5H16.5C21 8.5 24 11.5 24 15.5C24 19.5 21 22 17 22H11" stroke="#c8cacc" stroke-width="2" fill="none" stroke-linecap="round" stroke-linejoin="round"/></svg>
<svg style="left:542.3px;top:1284.5px" width="11.399999999999999" height="19.0" viewBox="0 0 12 20"><path d="M2.2 2.2L10 10L2.2 17.8" stroke="#a6a8aa" stroke-width="2.4" fill="none" stroke-linecap="round" stroke-linejoin="round"/></svg>
<div style="left:579.9000000000001px;top:1282.6px;width:20.3px;height:5.5px;background:#c9953c;"></div>
<div style="left:579.9000000000001px;top:1290.5px;width:20.3px;height:5.5px;background:#c9953c;"></div>
<div style="left:579.9000000000001px;top:1298.3999999999999px;width:20.3px;height:5.5px;background:#c9953c;"></div>
<div class="u" style="left:612.7px;top:1275.5px;font-size:26px;line-height:40px;color:#bbbbbb;letter-spacing:0.620px;"><span style="color:#f58a8a;">this</span> = <span style="color:#8c8c8c;">{ConfigurationClassParser$DeferredImportSelectorGroupingHandler@4133}</span></div>
<svg style="left:542.3px;top:1324.5px" width="11.399999999999999" height="19.0" viewBox="0 0 12 20"><path d="M2.2 2.2L10 10L2.2 17.8" stroke="#a6a8aa" stroke-width="2.4" fill="none" stroke-linecap="round" stroke-linejoin="round"/></svg>
<div style="left:579.9000000000001px;top:1322.6px;width:20.3px;height:5.5px;background:#c9953c;"></div>
<div style="left:579.9000000000001px;top:1330.5px;width:20.3px;height:5.5px;background:#c9953c;"></div>
<div style="left:579.9000000000001px;top:1338.3999999999999px;width:20.3px;height:5.5px;background:#c9953c;"></div>
<div class="u" style="left:612.7px;top:1315.5px;font-size:26px;line-height:40px;color:#bbbbbb;letter-spacing:0.620px;"><span style="color:#f58a8a;">grouping</span> = <span style="color:#8c8c8c;">{ConfigurationClassParser$DeferredImportSelectorGrouping@4141}</span></div>
<svg style="left:542.3px;top:1364.5px" width="11.399999999999999" height="19.0" viewBox="0 0 12 20"><path d="M2.2 2.2L10 10L2.2 17.8" stroke="#a6a8aa" stroke-width="2.4" fill="none" stroke-linecap="round" stroke-linejoin="round"/></svg>
<div style="left:579.9000000000001px;top:1362.6px;width:20.3px;height:5.5px;background:#c9953c;"></div>
<div style="left:579.9000000000001px;top:1370.5px;width:20.3px;height:5.5px;background:#c9953c;"></div>
<div style="left:579.9000000000001px;top:1378.3999999999999px;width:20.3px;height:5.5px;background:#c9953c;"></div>
<div class="u" style="left:612.7px;top:1355.5px;font-size:26px;line-height:40px;color:#bbbbbb;letter-spacing:0.620px;"><span style="color:#f58a8a;">exclusionFilter</span> = <span style="color:#8c8c8c;">{Predicate$lambda@4464}</span></div>
<svg style="left:542.3px;top:1404.5px" width="11.399999999999999" height="19.0" viewBox="0 0 12 20"><path d="M2.2 2.2L10 10L2.2 17.8" stroke="#a6a8aa" stroke-width="2.4" fill="none" stroke-linecap="round" stroke-linejoin="round"/></svg>
<svg style="left:573px;top:1406.5px" width="34" height="18" viewBox="0 0 34 18"><circle cx="8" cy="10" r="5.6" fill="none" stroke="#9fadb8" stroke-width="2.6"/><circle cx="26" cy="10" r="5.6" fill="none" stroke="#9fadb8" stroke-width="2.6"/><path d="M13.5 8.5Q17 6.5 20.5 8.5M1 6L3 8M33 6L31 8" stroke="#9fadb8" stroke-width="2.2" fill="none"/></svg>
<div class="u" style="left:612.7px;top:1395.5px;font-size:26px;line-height:40px;color:#bbbbbb;letter-spacing:0.620px;"><span style="color:#f58a8a;">this.configurationClasses</span> = <span style="color:#8c8c8c;">{HashMap@4137}  size = 8</span></div>
<div style="left:988px;top:464px;width:1694px;height:1074px;background:#4d504f;box-shadow:0 6px 14px rgba(0,0,0,.36);"></div>
<div style="left:988px;top:464px;width:1694px;height:40px;background:#2f65ca;"></div>
<svg style="left:1001.5px;top:477.8px" width="19.0" height="11.399999999999999" viewBox="0 0 20 12"><path d="M2.2 2.2L10 10L17.8 2.2" stroke="#d6dcec" stroke-width="2.4" fill="none" stroke-linecap="round" stroke-linejoin="round"/></svg>
<div style="left:1036.9px;top:470.09999999999997px;width:28.2px;height:28.2px;border-radius:50%;background:#b89260;"></div>
<div class="u" style="left:1037.4px;top:469.59999999999997px;width:28.2px;height:28.2px;line-height:28.2px;text-align:center;font-size:21px;color:#4a3a20;font-weight:normal;">f</div>
<svg style="left:1031px;top:464.5px" width="20" height="20" viewBox="0 0 20 20"><ellipse cx="9.3" cy="7.2" rx="5.4" ry="3.1" transform="rotate(-38 9.3 7.2)" fill="#9fb3c3"/><path d="M11.5 10.5L15 14" stroke="#d9e2ea" stroke-width="1.3"/></svg>
<div class="u" style="left:1074.7px;top:464.2px;font-size:26px;line-height:40px;color:#ffffff;letter-spacing:0.448px;">groupings = {LinkedHashMap@4463}  size = 1</div>
<svg style="left:1036.9px;top:517.8px" width="19.0" height="11.399999999999999" viewBox="0 0 20 12"><path d="M2.2 2.2L10 10L17.8 2.2" stroke="#a6a8aa" stroke-width="2.4" fill="none" stroke-linecap="round" stroke-linejoin="round"/></svg>
<div style="left:1078.1000000000001px;top:512.3px;width:20.3px;height:5.5px;background:#c9953c;"></div>
<div style="left:1078.1000000000001px;top:520.1999999999999px;width:20.3px;height:5.5px;background:#c9953c;"></div>
<div style="left:1078.1000000000001px;top:528.0999999999999px;width:20.3px;height:5.5px;background:#c9953c;"></div>
<div class="u" style="left:1110.8px;top:504.2px;font-size:26px;line-height:40px;color:#bbbbbb;letter-spacing:0.713px;"><span style="color:#8c8c8c;">{Class@4132}</span><span style="color:#c6c8ca;"> "class org.springframework.boot.autoconfigure.AutoConfigurationImportSelector$AutoConfigurationGroup"</span></div>
<div class="u" style="left:2598.4px;top:504.2px;font-size:26px;line-height:40px;color:#bbbbbb;letter-spacing:1.000px;"><span style="color:#8c8c8c;">-&gt; {ConfigurationClassParser$DeferredImportSelectorGrouping@4141}</span></div>
<svg style="left:1073.5px;top:557.8px" width="19.0" height="11.399999999999999" viewBox="0 0 20 12"><path d="M2.2 2.2L10 10L17.8 2.2" stroke="#a6a8aa" stroke-width="2.4" fill="none" stroke-linecap="round" stroke-linejoin="round"/></svg>
<div style="left:1114.3px;top:552.3px;width:20.3px;height:5.5px;background:#c9953c;"></div>
<div style="left:1114.3px;top:560.1999999999999px;width:20.3px;height:5.5px;background:#c9953c;"></div>
<div style="left:1114.3px;top:568.0999999999999px;width:20.3px;height:5.5px;background:#c9953c;"></div>
<div class="u" style="left:1147px;top:544.2px;font-size:26px;line-height:40px;color:#bbbbbb;letter-spacing:0.348px;"><span style="color:#f58a8a;">key</span> = </div>
<div class="u" style="left:1219.2px;top:544.2px;font-size:26px;line-height:40px;color:#bbbbbb;letter-spacing:0.713px;"><span style="color:#8c8c8c;">{Class@4132}</span><span style="color:#c6c8ca;"> "class org.springframework.boot.autoconfigure.AutoConfigurationImportSelector$AutoConfigurationGroup"</span></div>
<div style="left:1145.6000000000001px;top:590.1px;width:28.2px;height:28.2px;border-radius:50%;background:#c9953c;"></div>
<div class="u" style="left:1146.1000000000001px;top:589.6px;width:28.2px;height:28.2px;line-height:28.2px;text-align:center;font-size:21px;color:#4a3a20;font-weight:normal;">f</div>
<div class="u" style="left:1183px;top:584.2px;font-size:26px;line-height:40px;color:#bbbbbb;letter-spacing:0.715px;"><span style="color:#f58a8a;">cachedConstructor</span> = null</div>
<div style="left:1145.6000000000001px;top:630.1px;width:28.2px;height:28.2px;border-radius:50%;background:#c9953c;"></div>
<div class="u" style="left:1146.1000000000001px;top:629.6px;width:28.2px;height:28.2px;line-height:28.2px;text-align:center;font-size:21px;color:#4a3a20;font-weight:normal;">f</div>
<div class="u" style="left:1183px;top:624.2px;font-size:26px;line-height:40px;color:#bbbbbb;letter-spacing:0.408px;"><span style="color:#f58a8a;">newInstanceCallerCache</span> = null</div>
<svg style="left:1112.7px;top:713.7px" width="11.399999999999999" height="19.0" viewBox="0 0 12 20"><path d="M2.2 2.2L10 10L2.2 17.8" stroke="#a6a8aa" stroke-width="2.4" fill="none" stroke-linecap="round" stroke-linejoin="round"/></svg>
<div style="left:1145.6000000000001px;top:710.1px;width:28.2px;height:28.2px;border-radius:50%;background:#c9953c;"></div>
<div class="u" style="left:1146.1000000000001px;top:709.6px;width:28.2px;height:28.2px;line-height:28.2px;text-align:center;font-size:21px;color:#4a3a20;font-weight:normal;">f</div>
<div class="u" style="left:1183px;top:704.2px;font-size:26px;line-height:40px;color:#bbbbbb;letter-spacing:0.690px;"><span style="color:#f58a8a;">module</span> = <span style="color:#8c8c8c;">{Module@4480}</span><span style="color:#c6c8ca;"> "unnamed module @7720d8a2"</span></div>
<svg style="left:1112.7px;top:673.7px" width="11.399999999999999" height="19.0" viewBox="0 0 12 20"><path d="M2.2 2.2L10 10L2.2 17.8" stroke="#a6a8aa" stroke-width="2.4" fill="none" stroke-linecap="round" stroke-linejoin="round"/></svg>
<div style="left:1145.6000000000001px;top:670.1px;width:28.2px;height:28.2px;border-radius:50%;background:#c9953c;"></div>
<div class="u" style="left:1146.1000000000001px;top:669.6px;width:28.2px;height:28.2px;line-height:28.2px;text-align:center;font-size:21px;color:#4a3a20;font-weight:normal;">f</div>
<div class="u" style="left:1183px;top:664.2px;font-size:26px;line-height:40px;color:#bbbbbb;letter-spacing:0.772px;"><span style="color:#f58a8a;">name</span> = <span style="color:#6f9a5e;">"org.springframework.boot.autoconfigure.AutoConfigurationImportSelector$AutoConfigurationGroup"</span></div>
<svg style="left:1112.7px;top:753.7px" width="11.399999999999999" height="19.0" viewBox="0 0 12 20"><path d="M2.2 2.2L10 10L2.2 17.8" stroke="#a6a8aa" stroke-width="2.4" fill="none" stroke-linecap="round" stroke-linejoin="round"/></svg>
<div style="left:1145.6000000000001px;top:750.1px;width:28.2px;height:28.2px;border-radius:50%;background:#c9953c;"></div>
<div class="u" style="left:1146.1000000000001px;top:749.6px;width:28.2px;height:28.2px;line-height:28.2px;text-align:center;font-size:21px;color:#4a3a20;font-weight:normal;">f</div>
<svg style="left:1139.7px;top:744.5px" width="20" height="20" viewBox="0 0 20 20"><ellipse cx="9.3" cy="7.2" rx="5.4" ry="3.1" transform="rotate(-38 9.3 7.2)" fill="#9fb3c3"/><path d="M11.5 10.5L15 14" stroke="#d9e2ea" stroke-width="1.3"/></svg>
<div class="u" style="left:1183px;top:744.2px;font-size:26px;line-height:40px;color:#bbbbbb;letter-spacing:0.454px;"><span style="color:#f58a8a;">classLoader</span> = <span style="color:#8c8c8c;">{ClassLoaders$AppClassLoader@4140}</span></div>
<svg style="left:1112.7px;top:793.7px" width="11.399999999999999" height="19.0" viewBox="0 0 12 20"><path d="M2.2 2.2L10 10L2.2 17.8" stroke="#a6a8aa" stroke-width="2.4" fill="none" stroke-linecap="round" stroke-linejoin="round"/></svg>
<div style="left:1145.6000000000001px;top:790.1px;width:28.2px;height:28.2px;border-radius:50%;background:#c9953c;"></div>
<div class="u" style="left:1146.1000000000001px;top:789.6px;width:28.2px;height:28.2px;line-height:28.2px;text-align:center;font-size:21px;color:#4a3a20;font-weight:normal;">f</div>
<div class="u" style="left:1183px;top:784.2px;font-size:26px;line-height:40px;color:#bbbbbb;letter-spacing:0.779px;"><span style="color:#f58a8a;">packageName</span> = <span style="color:#6f9a5e;">"org.springframework.boot.autoconfigure"</span></div>
<div style="left:1145.6000000000001px;top:830.1px;width:28.2px;height:28.2px;border-radius:50%;background:#c9953c;"></div>
<div class="u" style="left:1146.1000000000001px;top:829.6px;width:28.2px;height:28.2px;line-height:28.2px;text-align:center;font-size:21px;color:#4a3a20;font-weight:normal;">f</div>
<svg style="left:1139.7px;top:824.5px" width="20" height="20" viewBox="0 0 20 20"><ellipse cx="9.3" cy="7.2" rx="5.4" ry="3.1" transform="rotate(-38 9.3 7.2)" fill="#9fb3c3"/><path d="M11.5 10.5L15 14" stroke="#d9e2ea" stroke-width="1.3"/></svg>
<div class="u" style="left:1183px;top:824.2px;font-size:26px;line-height:40px;color:#bbbbbb;letter-spacing:0.494px;"><span style="color:#f58a8a;">componentType</span> = null</div>
<svg style="left:1112.7px;top:873.7px" width="11.399999999999999" height="19.0" viewBox="0 0 12 20"><path d="M2.2 2.2L10 10L2.2 17.8" stroke="#a6a8aa" stroke-width="2.4" fill="none" stroke-linecap="round" stroke-linejoin="round"/></svg>
<div style="left:1145.6000000000001px;top:870.1px;width:28.2px;height:28.2px;border-radius:50%;background:#c9953c;"></div>
<div class="u" style="left:1146.1000000000001px;top:869.6px;width:28.2px;height:28.2px;line-height:28.2px;text-align:center;font-size:21px;color:#4a3a20;font-weight:normal;">f</div>
<div class="u" style="left:1183px;top:864.2px;font-size:26px;line-height:40px;color:#bbbbbb;letter-spacing:0.625px;"><span style="color:#f58a8a;">reflectionData</span> = <span style="color:#8c8c8c;">{SoftReference@4482}</span></div>
<div style="left:1145.6000000000001px;top:910.1px;width:28.2px;height:28.2px;border-radius:50%;background:#c9953c;"></div>
<div class="u" style="left:1146.1000000000001px;top:909.6px;width:28.2px;height:28.2px;line-height:28.2px;text-align:center;font-size:21px;color:#4a3a20;font-weight:normal;">f</div>
<div class="u" style="left:1183px;top:904.2px;font-size:26px;line-height:40px;color:#bbbbbb;letter-spacing:0.528px;"><span style="color:#f58a8a;">classRedefinedCount</span> = 0</div>
<div style="left:1145.6000000000001px;top:950.1px;width:28.2px;height:28.2px;border-radius:50%;background:#c9953c;"></div>
<div class="u" style="left:1146.1000000000001px;top:949.6px;width:28.2px;height:28.2px;line-height:28.2px;text-align:center;font-size:21px;color:#4a3a20;font-weight:normal;">f</div>
<div class="u" style="left:1183px;top:944.2px;font-size:26px;line-height:40px;color:#bbbbbb;letter-spacing:0.502px;"><span style="color:#f58a8a;">genericInfo</span> = null</div>
<div style="left:1145.6000000000001px;top:990.1px;width:28.2px;height:28.2px;border-radius:50%;background:#c9953c;"></div>
<div class="u" style="left:1146.1000000000001px;top:989.6px;width:28.2px;height:28.2px;line-height:28.2px;text-align:center;font-size:21px;color:#4a3a20;font-weight:normal;">f</div>
<div class="u" style="left:1183px;top:984.2px;font-size:26px;line-height:40px;color:#bbbbbb;letter-spacing:0.524px;"><span style="color:#f58a8a;">enumConstants</span> = null</div>
<div style="left:1145.6000000000001px;top:1030.1000000000001px;width:28.2px;height:28.2px;border-radius:50%;background:#c9953c;"></div>
<div class="u" style="left:1146.1000000000001px;top:1029.6000000000001px;width:28.2px;height:28.2px;line-height:28.2px;text-align:center;font-size:21px;color:#4a3a20;font-weight:normal;">f</div>
<div class="u" style="left:1183px;top:1024.2px;font-size:26px;line-height:40px;color:#bbbbbb;letter-spacing:0.624px;"><span style="color:#f58a8a;">enumConstantDirectory</span> = null</div>
<div style="left:1145.6000000000001px;top:1070.1000000000001px;width:28.2px;height:28.2px;border-radius:50%;background:#c9953c;"></div>
<div class="u" style="left:1146.1000000000001px;top:1069.6000000000001px;width:28.2px;height:28.2px;line-height:28.2px;text-align:center;font-size:21px;color:#4a3a20;font-weight:normal;">f</div>
<div class="u" style="left:1183px;top:1064.2px;font-size:26px;line-height:40px;color:#bbbbbb;letter-spacing:0.534px;"><span style="color:#f58a8a;">annotationData</span> = null</div>
<div style="left:1145.6000000000001px;top:1110.1000000000001px;width:28.2px;height:28.2px;border-radius:50%;background:#c9953c;"></div>
<div class="u" style="left:1146.1000000000001px;top:1109.6000000000001px;width:28.2px;height:28.2px;line-height:28.2px;text-align:center;font-size:21px;color:#4a3a20;font-weight:normal;">f</div>
<div class="u" style="left:1183px;top:1104.2px;font-size:26px;line-height:40px;color:#bbbbbb;letter-spacing:0.356px;"><span style="color:#f58a8a;">annotationType</span> = null</div>
<div style="left:1145.6000000000001px;top:1150.1000000000001px;width:28.2px;height:28.2px;border-radius:50%;background:#c9953c;"></div>
<div class="u" style="left:1146.1000000000001px;top:1149.6000000000001px;width:28.2px;height:28.2px;line-height:28.2px;text-align:center;font-size:21px;color:#4a3a20;font-weight:normal;">f</div>
<div class="u" style="left:1183px;top:1144.2px;font-size:26px;line-height:40px;color:#bbbbbb;letter-spacing:0.295px;"><span style="color:#f58a8a;">classValueMap</span> = null</div>
<svg style="left:1077.3px;top:1193.7px" width="11.399999999999999" height="19.0" viewBox="0 0 12 20"><path d="M2.2 2.2L10 10L2.2 17.8" stroke="#a6a8aa" stroke-width="2.4" fill="none" stroke-linecap="round" stroke-linejoin="round"/></svg>
<div style="left:1114.3px;top:1192.3px;width:20.3px;height:5.5px;background:#c9953c;"></div>
<div style="left:1114.3px;top:1200.2px;width:20.3px;height:5.5px;background:#c9953c;"></div>
<div style="left:1114.3px;top:1208.1px;width:20.3px;height:5.5px;background:#c9953c;"></div>
<div class="u" style="left:1147px;top:1184.2px;font-size:26px;line-height:40px;color:#bbbbbb;letter-spacing:0.482px;"><span style="color:#f58a8a;">value</span> = <span style="color:#8c8c8c;">{ConfigurationClassParser$DeferredImportSelectorGrouping@4141}</span></div>
<div style="left:988px;top:1452px;width:1694px;height:8px;background:linear-gradient(180deg,#4d504f,#46494b);"></div>
<div style="left:988px;top:1460px;width:1694px;height:78px;background:#46494b;"></div>
<div style="left:993.9px;top:1461.3px;width:1416.1px;height:17px;background:#58595b;border-radius:8.5px;"></div>
<div class="u" style="left:1011px;top:1492.2px;font-size:26px;line-height:40px;color:#589df6;letter-spacing:0.364px;">Create renderer</div>
<div class="u" style="left:1233px;top:1492.2px;font-size:26px;line-height:40px;color:#589df6;letter-spacing:0.451px;">Add as inline watch</div>
<div style="left:1061.6px;top:391px;width:920.6000000000001px;height:77.60000000000002px;border:6.6px solid #e94127;border-radius:10.5px;"></div>
<div style="left:1080.2px;top:647.8px;width:1495.8999999999999px;height:72.30000000000007px;border:6.6px solid #e94127;border-radius:10.5px;"></div>
</div></body></html>
